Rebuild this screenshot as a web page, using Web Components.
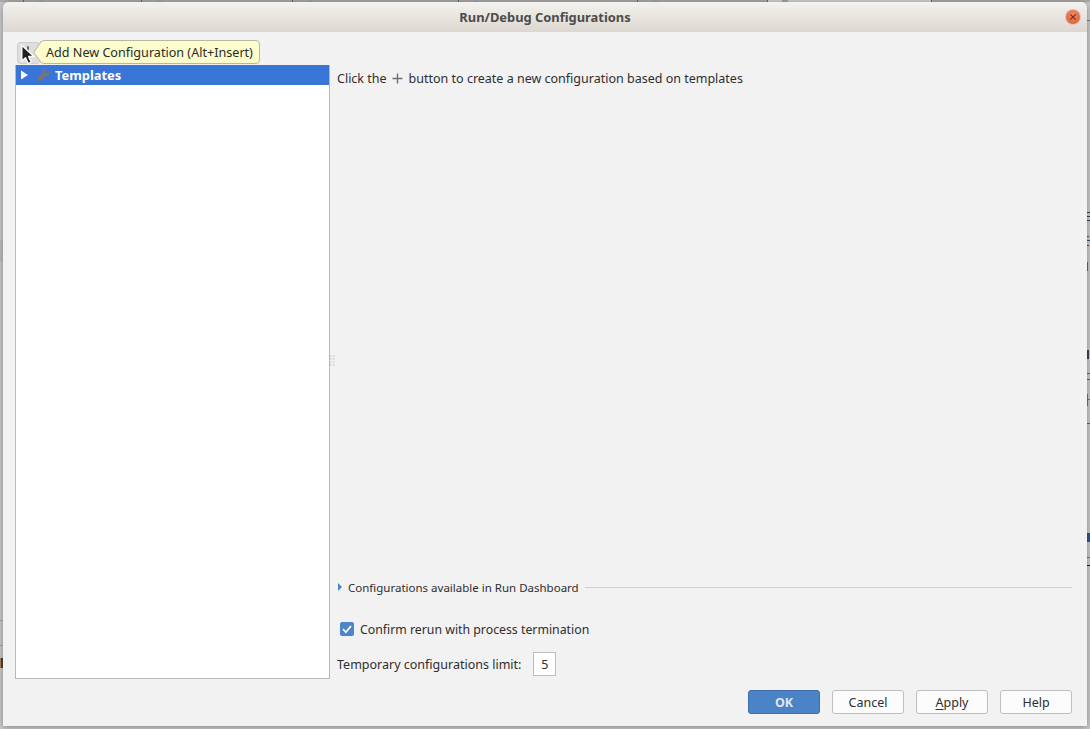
<!DOCTYPE html>
<html><head><meta charset="utf-8">
<style>html,body{margin:0;padding:0;overflow:hidden}body{font-family:"Noto Sans","Open Sans",sans-serif;font-size:12.5px;color:#2e2e2e}</style>
</head><body>
<x-desktop>
<x-window title="Run/Debug Configurations">
  <x-toolbar slot="toolbar"></x-toolbar>
  <x-tree slot="tree"></x-tree>
  <x-detail slot="detail"></x-detail>
  <x-footer slot="footer"></x-footer>
</x-window>
</x-desktop>
<script>
function el(name,css,html){customElements.define(name,class extends HTMLElement{constructor(){super();this.attachShadow({mode:'open'}).innerHTML='<style>'+css+'</style>'+html(this)}})}
const marks=[[0,240,3,22,'#bdbdbd'],[0,620,3,1,'#a8a8a8'],[0,645,3,1,'#a8a8a8'],[0,658,1,10,'#b77f45'],[1,658,2,10,'#39465a'],
[1087,20,3,1,'#7a7a7a'],[1087,212,3,1,'#3a4656'],[1087,216,3,1,'#3a4656'],[1087,220,3,1,'#3a4656'],[1087,236,2,1,'#3a5270'],[1087,240,3,1,'#3a5270'],[1087,245,2,1,'#3a5270'],[1087,262,1,9,'#5b6b7a'],[1087,350,2,9,'#39465a'],[1087,373,3,1,'#6a6a5a'],[1087,379,3,1,'#6a6a5a'],[1087,394,1,12,'#1f9a93'],[1088,399,2,1,'#1f9a93'],[1087,423,3,1,'#666'],[1087,533,3,9,'#31588f'],[1087,557,3,1,'#777'],[1087,565,3,1,'#222'],
[0,0,1090,2,'#a9a9a9'],[767,0,164,2,'#cfcfcf'],[23,0,1,2,'#666'],[141,0,1,2,'#666'],[292,0,1,2,'#666'],[458,0,1,2,'#666'],[637,0,1,2,'#666'],[767,0,1,2,'#666'],[931,0,1,2,'#666'],
[38,0,6,2,'#9ba4ae'],[156,0,6,2,'#9ba4ae'],[307,0,6,2,'#9ba4ae'],[473,0,6,2,'#9ba4ae'],[652,0,6,2,'#9ba4ae'],[782,0,6,2,'#9ba4ae']];
el('x-desktop',`:host{display:block;position:relative;width:1090px;height:729px;overflow:hidden;box-sizing:border-box;padding:2px 3px 3px 3px;background:#c9c9c9}
.m{position:absolute}`,()=>marks.map(m=>`<span class="m" style="left:${m[0]}px;top:${m[1]}px;width:${m[2]}px;height:${m[3]}px;background:${m[4]}"></span>`).join('')+`<slot></slot>`);
el('x-window',`:host{display:flex;flex-direction:column;position:relative;width:1084px;height:724px;background:#f2f2f2;border-radius:6px 6px 0 0;box-shadow:0 1px 6px rgba(0,0,0,.35);overflow:hidden}
header{height:30px;flex:none;box-sizing:border-box;display:flex;align-items:center;justify-content:center;background:linear-gradient(#f4f2ef,#dcd7d0);font:bold 12.9px "Noto Sans",sans-serif;color:#4c4c4c;position:relative;padding-bottom:1px}
.close{position:absolute;right:6px;top:7px}
.body{flex:1;display:flex;flex-direction:column;padding:8px 15px 12px 12px;min-height:0}
.top{flex:1;display:grid;grid-template-columns:315px 1fr;grid-template-rows:25px 1fr;min-height:0}
::slotted([slot=toolbar]){grid-column:1/-1}`,(h)=>`
<header>${h.getAttribute('title')}<svg class="close" width="16" height="16" viewBox="0 0 16 16"><defs><radialGradient id="g" cx=".5" cy=".35" r=".7"><stop offset="0" stop-color="#f58a62"/><stop offset="1" stop-color="#e85e32"/></radialGradient></defs><circle cx="8" cy="8" r="8" fill="#cfc9c3"/><circle cx="8" cy="8" r="7" fill="url(#g)"/><path d="M5.300 5.300l5.400 5.400M10.700 5.300l-5.400 5.400" stroke="#5c3526" stroke-width="1.100"/></svg></header>
<div class="body"><div class="top"><slot name="toolbar"></slot><slot name="tree"></slot><slot name="detail"></slot></div><slot name="footer"></slot></div>`);
el('x-toolbar',`:host{display:block;position:relative}
.btn{position:absolute;left:2px;top:2px;width:23px;height:22px;box-sizing:border-box;background:#dedede;border:1px solid #cfcfcf;border-radius:3px}
.tip{position:absolute;left:25px;top:0;width:220px;height:24px;box-sizing:border-box;background:#fdfccb;border:1px solid #b7b7a5;border-radius:4px;display:flex;align-items:center;padding-left:5px;font-size:12.6px;color:#2b2b2b;white-space:nowrap}
.arrow{position:absolute;left:-8px;top:-1px}
.cur{position:absolute;left:3px;top:3px}`,()=>`
<div class="btn"></div>
<div class="tip"><svg class="arrow" width="9" height="24" viewBox="0 0 9 24"><path d="M9 1L.8 12.500 9 23z" fill="#fdfccb"/><path d="M8.500 1L.8 12.500 8.500 23" fill="none" stroke="#b7b7a5"/></svg><span>Add New Configuration (Alt+Insert)</span></div>
<svg class="cur" width="21" height="25" viewBox="0 0 20 24"><path d="M9.500 3v7" stroke="#4a4a4a" stroke-width="1.500"/><path d="M3.500 2v15.500l3.600-3.200 2.600 5.500 3-1.400-2.500-5.300h5.300z" fill="#1f1f1f" stroke="#f6f6f6" stroke-width="1.500" stroke-linejoin="round"/></svg>`);
el('x-tree',`:host{display:block;box-sizing:border-box;background:#fff;border:1px solid #b9b9b9;border-top:none;min-height:0}
.row{height:20px;background:#3875d7;display:flex;align-items:center;color:#fff;font-weight:bold;font-size:12.9px;padding-left:4px}
.w{margin-left:8px}.label{margin-left:4px}`,()=>`
<div class="row"><svg width="9" height="10" viewBox="0 0 9 10"><path d="M1 .5L8 5 1 9.500z" fill="#fff"/></svg><svg class="w" width="14" height="14" viewBox="0 0 15 15"><path d="M13.600 3.200l-2.500 2.400-1.800-.5-.5-1.800L11.200.9C9.600.3 7.900.7 6.900 1.900 6 3 5.800 4.300 6.300 5.500L1 10.800c-.6.600-.6 1.500 0 2.100l.8.800c.6.600 1.500.6 2.100 0l5.300-5.300c1.200.5 2.600.2 3.600-.8 1.100-1.100 1.400-2.900.8-4.400z" fill="#7d7468"/></svg><span class="label">Templates</span></div>`);
el('x-detail',`:host{display:flex;flex-direction:column;min-height:0;padding:0 0 3px 7px;position:relative}
.hint{display:flex;align-items:center;height:18px;margin-top:4px;white-space:nowrap;flex:none}
.hint svg{margin:0 6px 0 5px}
.sp{flex:1}
.sec{display:flex;align-items:center;height:18px;white-space:nowrap;font-size:11.5px}
.sec svg{margin:0 6px 0 1px}
.sec i{flex:1;height:1px;background:#cfcfcf;margin-left:6px}
.chk{display:flex;align-items:center;height:18px;margin-top:24px;padding-left:3px;white-space:nowrap;font-size:12.3px}
.chk svg{margin-right:6px}
.lim{display:flex;align-items:center;height:24px;margin-top:14px;white-space:nowrap}
.box{width:23px;height:24px;box-sizing:border-box;border:1px solid #bdbdbd;background:#fff;display:flex;align-items:center;justify-content:center;margin-left:12px}
.grip{position:absolute;left:0;top:290px}`,()=>`
<svg class="grip" width="5" height="12" viewBox="0 0 5 12" fill="#b8b8b8"><circle cx=".8" cy="1" r=".7"/><circle cx="3.800" cy="1" r=".7"/><circle cx=".8" cy="4" r=".7"/><circle cx="3.800" cy="4" r=".7"/><circle cx=".8" cy="7" r=".7"/><circle cx="3.800" cy="7" r=".7"/><circle cx=".8" cy="10" r=".7"/><circle cx="3.800" cy="10" r=".7"/></svg>
<div class="hint"><span>Click the</span><svg width="11" height="11" viewBox="0 0 11 11"><path d="M5.500 .5v10M.5 5.500h10" stroke="#6e6e6e" stroke-width="1.400"/></svg><span>button to create a new configuration based on templates</span></div>
<div class="sp"></div>
<div class="sec"><svg width="4" height="8" viewBox="0 0 4 8"><path d="M0 0l4 4-4 4z" fill="#4a86b8"/></svg><span>Configurations available in Run Dashboard</span><i></i></div>
<div class="chk"><svg width="14" height="14" viewBox="0 0 14 14"><rect width="14" height="14" rx="2" fill="#4a86c8"/><path d="M3 7.200l2.900 3L11 4" fill="none" stroke="#fff" stroke-width="1.800"/></svg><span>Confirm rerun with process termination</span></div>
<div class="lim"><span>Temporary configurations limit:</span><div class="box">5</div></div>`);
el('x-footer',`:host{display:flex;justify-content:flex-end;gap:12px;flex:none;margin-top:11px}
b,span{width:72px;height:24px;box-sizing:border-box;border-radius:3px;display:flex;align-items:center;justify-content:center;font-size:12.5px}
b{background:#4a83c6;border:1px solid #3d70ad;color:#dfe8f3}
span{background:#fcfcfc;border:1px solid #bfbfbf;color:#2e2e2e}
u{text-underline-offset:2px}`,()=>`<b>OK</b><span>Cancel</span><span><u>A</u>pply</span><span>Help</span>`);
</script>
</body></html>
